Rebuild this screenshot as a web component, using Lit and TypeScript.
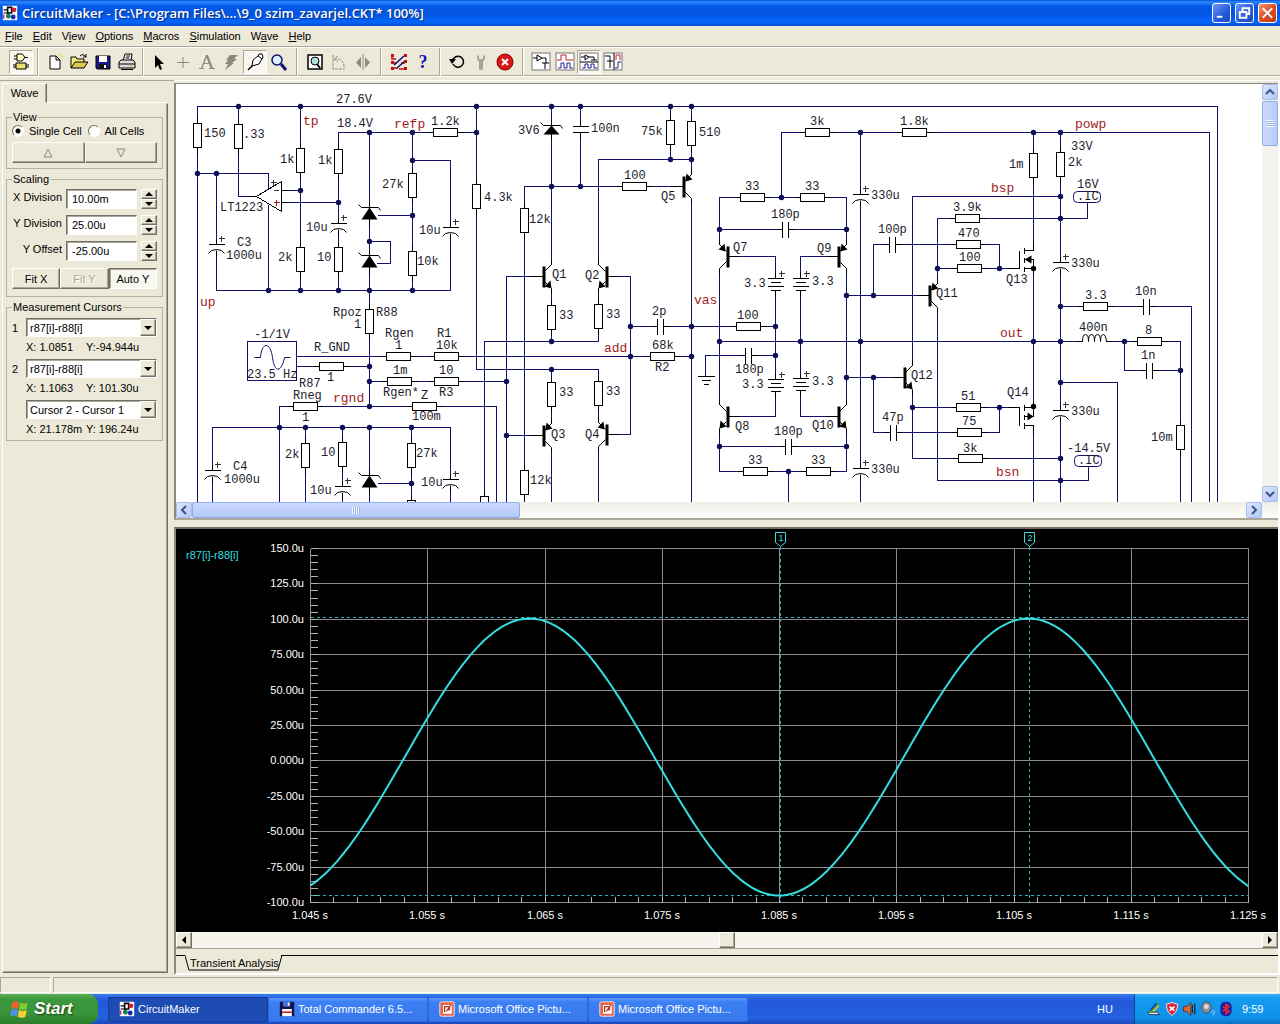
import { LitElement, html, svg, css } from "lit";
import { customElement, property } from "lit/decorators.js";
import { classMap } from "lit/directives/class-map.js";

type Pt = [number, number];

/* ---------- schematic data ---------- */

const WIRES: number[][] = [
  [197, 502, 197, 106, 1217, 106, 1217, 502],
  [238, 106, 238, 196, 256, 196],
  [300, 106, 300, 290],
  [281, 190, 300, 190],
  [281, 202, 338, 202],
  [197, 173, 268, 173, 268, 188],
  [268, 204, 268, 290],
  [216, 173, 216, 290, 450, 290, 450, 160, 412, 160],
  [338, 290, 338, 132, 476, 132],
  [369, 132, 369, 406],
  [377, 215, 412, 215],
  [369, 241, 390, 241, 390, 263, 376, 263],
  [412, 132, 412, 290],
  [296, 356, 691, 356],
  [296, 366, 369, 366],
  [369, 381, 506, 381],
  [279, 502, 279, 406, 496, 406, 496, 502],
  [212, 502, 212, 427, 450, 427, 450, 502],
  [305, 427, 305, 502],
  [342, 427, 342, 502],
  [369, 427, 369, 502],
  [411, 427, 411, 502],
  [377, 483, 411, 483],
  [476, 106, 476, 369, 598, 369, 598, 422],
  [551, 106, 551, 264],
  [580, 106, 580, 186],
  [670, 106, 670, 159],
  [691, 106, 691, 174],
  [691, 159, 598, 159, 598, 264],
  [683, 186, 524, 186, 524, 502],
  [691, 198, 691, 502],
  [543, 276, 506, 276, 506, 502],
  [606, 276, 630, 276, 630, 434, 606, 434],
  [551, 288, 551, 341],
  [598, 288, 598, 341, 484, 341, 484, 502],
  [551, 369, 551, 423],
  [506, 435, 543, 435],
  [551, 447, 551, 502],
  [598, 446, 598, 502],
  [630, 326, 775, 326],
  [705, 376, 705, 355, 775, 355],
  [781, 197, 781, 132, 1209, 132, 1209, 502],
  [719, 244, 719, 197, 846, 197, 846, 244],
  [719, 229, 846, 229],
  [727, 256, 775, 256, 775, 416, 727, 416],
  [838, 256, 800, 256, 800, 416, 838, 416],
  [860, 132, 860, 502],
  [873, 295, 873, 244, 999, 244, 999, 268],
  [912, 365, 912, 196, 1060, 196],
  [937, 283, 937, 218, 1087, 218, 1087, 202],
  [937, 268, 1019, 268],
  [846, 295, 929, 295],
  [937, 307, 937, 480, 1088, 480, 1088, 466],
  [719, 341, 1082, 341],
  [1105, 341, 1180, 341, 1180, 502],
  [719, 268, 719, 404],
  [846, 268, 846, 404],
  [719, 428, 719, 471, 846, 471, 846, 428],
  [719, 446, 846, 446],
  [788, 471, 788, 502],
  [846, 377, 904, 377],
  [873, 377, 873, 432, 999, 432, 999, 407],
  [912, 389, 912, 458, 1060, 458],
  [912, 407, 1019, 407],
  [1033, 132, 1033, 244],
  [1033, 268, 1033, 406],
  [1033, 425, 1033, 502],
  [1060, 132, 1060, 502],
  [1060, 306, 1191, 306, 1191, 502],
  [1124, 341, 1124, 370, 1180, 370],
  [1060, 382, 1117, 382, 1117, 502],
];

const DOTS: Pt[] = [
  [238, 106], [300, 106], [476, 106], [551, 106], [580, 106], [670, 106], [691, 106],
  [369, 132], [412, 132], [476, 132], [412, 160], [197, 173], [216, 173], [300, 190], [338, 202],
  [412, 215], [369, 241], [268, 290], [300, 290], [338, 290], [369, 290], [412, 290],
  [369, 366], [369, 381], [369, 406], [279, 427], [305, 427], [342, 427], [369, 427], [411, 427], [411, 483],
  [551, 186], [580, 186], [670, 159], [691, 159], [551, 341], [551, 369], [506, 381], [506, 435],
  [630, 326], [630, 356], [691, 326], [691, 356], [860, 132], [1033, 132], [1060, 132], [781, 197],
  [719, 229], [846, 229], [937, 268], [999, 268], [846, 295], [873, 295], [775, 326], [775, 355],
  [719, 341], [800, 341], [860, 341], [1033, 341], [1060, 341], [1124, 341], [846, 377], [873, 377],
  [912, 407], [999, 407], [719, 446], [846, 446], [788, 471], [1060, 196], [1060, 218], [1060, 306],
  [1060, 382], [1060, 458], [1060, 480], [1180, 370],
];

const RES_V: Pt[] = [
  [197, 135], [238, 136], [300, 160], [338, 161], [412, 185], [300, 259], [338, 259], [412, 263],
  [369, 321], [305, 455], [342, 454], [411, 455], [476, 196], [524, 220], [670, 132], [691, 133],
  [551, 317], [598, 316], [551, 394], [598, 393], [524, 482], [484, 508], [411, 512],
  [1033, 165], [1060, 164], [1180, 437],
];

const RES_H: Pt[] = [
  [445, 132], [398, 356], [446, 356], [662, 356], [331, 366], [399, 381], [446, 381], [305, 406], [424, 406],
  [634, 186], [817, 132], [914, 132], [752, 197], [812, 197], [967, 218], [968, 244], [969, 268],
  [748, 326], [755, 471], [818, 471], [968, 407], [969, 432], [970, 458], [1095, 306], [1149, 341],
];

/* polarised capacitors: straight plate position */
const CAP_P: Pt[] = [
  [216, 244], [338, 223], [450, 227], [212, 470], [342, 486], [450, 479],
  [860, 194], [860, 468], [1060, 262], [1060, 410],
];

/* plain capacitors on horizontal wires: left plate */
const CAP_H: Pt[] = [
  [657, 326], [782, 229], [745, 355], [785, 446], [889, 244], [890, 432], [1143, 306], [1146, 370],
];

const CELLS: Pt[] = [[775, 278], [800, 278], [775, 379], [800, 378]];

const ZENERS: [number, number, number][] = [
  [369, 207, 12], [369, 255, 12], [369, 475, 12], [551, 125, 9],
];

/* bar x, centre y, lead direction, PNP */
const BJTS: [number, number, number, boolean][] = [
  [543, 276, 1, false], [606, 276, -1, false], [543, 435, 1, true], [606, 434, -1, true], [683, 186, 1, true],
  [727, 256, -1, true], [838, 256, 1, true], [727, 416, -1, false], [838, 416, 1, false],
  [929, 295, 1, true], [904, 377, 1, false],
];

const LABELS: [number, number, string][] = [
  [336, 103, "27.6V"], [337, 127, "18.4V"], [204, 137, "150"], [243, 138, ".33"], [280, 163, "1k"], [318, 164, "1k"],
  [382, 188, "27k"], [220, 211, "LT1223"], [306, 231, "10u"], [419, 234, "10u"], [237, 246, "C3"], [226, 259, "1000u"],
  [278, 261, "2k"], [317, 261, "10"], [417, 265, "10k"], [431, 125, "1.2k"],
  [333, 316, "Rpoz"], [376, 316, "R88"], [354, 328, "1"], [254, 338, "-1/1V"], [314, 351, "R_GND"], [385, 337, "Rgen"],
  [395, 349, "1"], [247, 378, "23.5 Hz"], [327, 381, "1"], [393, 374, "1m"], [439, 374, "10"], [436, 349, "10k"],
  [437, 337, "R1"], [439, 396, "R3"], [383, 396, "Rgen*"], [421, 399, "Z"], [412, 420, "100m"], [299, 387, "R87"],
  [293, 399, "Rneg"], [302, 421, "1"], [233, 470, "C4"], [224, 483, "1000u"], [285, 458, "2k"], [321, 456, "10"],
  [416, 457, "27k"], [310, 494, "10u"], [421, 486, "10u"],
  [484, 201, "4.3k"], [518, 134, "3V6"], [591, 132, "100n"], [641, 135, "75k"], [699, 136, "510"], [624, 179, "100"],
  [661, 200, "Q5"], [529, 223, "12k"], [552, 278, "Q1"], [585, 279, "Q2"], [559, 319, "33"], [606, 318, "33"],
  [652, 315, "2p"], [652, 349, "68k"], [655, 371, "R2"], [559, 396, "33"], [606, 395, "33"], [551, 438, "Q3"],
  [585, 438, "Q4"], [530, 484, "12k"],
  [810, 125, "3k"], [900, 125, "1.8k"], [745, 190, "33"], [805, 190, "33"], [771, 218, "180p"], [871, 199, "330u"],
  [953, 211, "3.9k"], [958, 237, "470"], [959, 261, "100"], [878, 233, "100p"], [733, 251, "Q7"], [817, 252, "Q9"],
  [744, 287, "3.3"], [812, 285, "3.3"], [936, 297, "Q11"], [737, 319, "100"], [735, 373, "180p"], [742, 388, "3.3"],
  [812, 385, "3.3"], [735, 430, "Q8"], [812, 429, "Q10"], [774, 435, "180p"], [748, 464, "33"], [811, 464, "33"],
  [871, 473, "330u"], [882, 421, "47p"], [911, 379, "Q12"], [961, 400, "51"], [962, 425, "75"], [963, 452, "3k"],
  [1077, 188, "16V"], [1077, 200, ".IC"], [1071, 150, "33V"], [1068, 166, "2k"], [1009, 168, "1m"],
  [1071, 267, "330u"], [1006, 283, "Q13"], [1085, 299, "3.3"], [1135, 295, "10n"], [1079, 331, "400n"],
  [1145, 334, "8"], [1141, 359, "1n"], [1007, 396, "Q14"], [1071, 415, "330u"], [1151, 441, "10m"],
  [1067, 452, "-14.5V"], [1078, 464, ".IC"],
];

const NETS: [number, number, string][] = [
  [303, 125, "tp"], [394, 128, "refp"], [200, 306, "up"], [333, 402, "rgnd"], [604, 352, "add"], [694, 304, "vas"],
  [1075, 128, "powp"], [991, 192, "bsp"], [1000, 337, "out"], [996, 476, "bsn"],
];

const bjt = ([bx, cy, d, pnp]: [number, number, number, boolean]) => {
  const s = pnp ? -1 : 1;
  const o: Pt = [bx + 8 * d, cy + 12 * s];
  const i: Pt = [bx + 2 * d, cy + 5 * s];
  const [tip, base] = pnp ? [i, [bx + 6 * d, cy + 10 * s] as Pt] : [o, [bx + 4 * d, cy + 7 * s] as Pt];
  const w: Pt = [3 * d, -3 * s];
  const arrow = `${tip} ${base[0] + w[0]},${base[1] + w[1]} ${base[0] - w[0]},${base[1] - w[1]}`;
  return svg`
    <path class="thin" d="M${bx + d},${cy - 5} L${bx + 8 * d},${cy - 12} v-5 M${bx + d},${cy + 5} L${bx + 8 * d},${cy + 12} v5 M${bx},${cy} h${-12 * d}"/>
    <polygon class="solid" points=${arrow} />
    <rect class="solid" x=${bx - 1} y=${cy - 10} width="3" height="21"/>`;
};

@customElement("circuit-sheet")
class CircuitSheet extends LitElement {
  static styles = css`
    :host { display: block; flex: 1; min-width: 0; overflow: hidden; background: #fff; }
    svg { display: block; }
    .wire { fill: none; stroke: #12126e; shape-rendering: crispEdges; }
    .dot { fill: #10105a; }
    .part { fill: #fff; stroke: #000; shape-rendering: crispEdges; }
    .line { fill: none; stroke: #000; shape-rendering: crispEdges; }
    .thin { fill: none; stroke: #000; }
    .solid { fill: #000; }
    .gap { fill: #fff; }
    .frame { fill: none; stroke: #12126e; }
    .plus { fill: none; stroke: #333; shape-rendering: crispEdges; }
    .red { stroke: #a01818; }
    .label { font: 12px "Liberation Mono", monospace; fill: #1c1c2c; white-space: pre; }
    .net { font: 13px "Liberation Mono", monospace; fill: #a01c1c; }
  `;
  render() {
    const plus = (x: number, y: number) => svg`<path class="plus" d="M${x - 3},${y} h6 M${x},${y - 3} v6"/>`;
    return html`<svg width="1086" height="418" viewBox="176 84 1086 418" role="img" aria-label="Amplifier schematic">
      <g transform="translate(.5 .5)">
        ${WIRES.map((w) => svg`<polyline class="wire" points=${w.join(" ")} />`)}
        ${DOTS.map(([x, y]) => svg`<circle class="dot" cx=${x} cy=${y} r="2.7"/>`)}
        ${RES_V.map(([x, y]) => svg`<path class="line" d="M${x},${y - 18} v36"/><rect class="part" x=${x - 4} y=${y - 12} width="8" height="24"/>`)}
        ${RES_H.map(([x, y]) => svg`<path class="line" d="M${x - 18},${y} h36"/><rect class="part" x=${x - 12} y=${y - 4} width="24" height="8"/>`)}
        ${CAP_P.map(([x, y]) => svg`<rect class="gap" x=${x - 2} y=${y} width="4" height="6"/>
          <path class="line" d="M${x},${y - 6} v6 M${x - 8},${y} h16 M${x},${y + 6} v6"/>
          <path class="thin" d="M${x - 8},${y + 9} q2,-4 8,-4 q6,0 8,4"/>${plus(x + 5, y - 6)}`)}
        ${CAP_H.map(([x, y]) => svg`<rect class="gap" x=${x} y=${y - 2} width="6" height="4"/>
          <path class="line" d="M${x - 6},${y} h6 M${x},${y - 8} v16 M${x + 6},${y - 8} v16 M${x + 6},${y} h6"/>`)}
        <rect class="gap" x="578" y="126" width="4" height="6"/>
        <path class="line" d="M580,120 v6 M572,126 h16 M572,132 h16 M580,132 v6"/>
        ${CELLS.map(([x, y]) => svg`<rect class="gap" x=${x - 2} y=${y} width="4" height="12"/>
          <path class="line" d="M${x},${y - 6} v6 M${x - 8},${y} h16 M${x - 5},${y + 4} h10 M${x - 8},${y + 8} h16 M${x - 5},${y + 12} h10 M${x},${y + 12} v6"/>${plus(x + 6, y - 5)}`)}
        ${ZENERS.map(([x, y, h]) => svg`<path class="thin" d="M${x - 11},${y - 3} l3,3 h17 l2,3"/>
          <path class="line" d="M${x},${y - 6} v${h + 12}"/>
          <polygon class="solid" points="${x},${y} ${x + 8},${y + h} ${x - 8},${y + h}"/>`)}
        ${BJTS.map(bjt)}
        <polygon class="part" points="256,196 281,181 281,211"/>
        <path class="line" d="M250,196 h6 M281,190 h6 M281,202 h6"/>
        <path class="plus" d="M273,190 h5 M270,182 h6 M273,179 v6"/>
        <path class="plus red" d="M273,202 h6 M276,199 v6"/>
        <rect class="frame" x="247" y="341" width="49" height="39"/>
        <path class="frame" d="M254,357 h6 C261,341 270,341 272,357 S281,372 284,357 h6"/>
        <path class="line" d="M697,376 h17 M701,380 h9 M703,384 h5"/>
        <rect class="frame" x="1073" y="191" width="27" height="11" rx="4"/>
        <rect class="frame" x="1074" y="455" width="27" height="11" rx="4"/>
        <path class="thin" d="M1076,341 h6 q0,-7 3,-7 q3,0 3,7 q0,-7 3,-7 q3,0 3,7 q0,-7 3,-7 q3,0 3,7 q0,-7 3,-7 q2,0 3,7 h6"/>
        <path class="line" d="M1007,268 h12 V250 M1024,247 v6 M1024,257 v5 M1024,266 v5 M1024,250 h9 v-8 M1024,259 h9 v14 M1024,268 h9"/>
        <polygon class="solid" points="1024,259 1031,255 1031,263"/><circle class="solid" cx="1033" cy="268" r="2.7"/>
        <path class="line" d="M1007,407 h12 V425 M1024,404 v6 M1024,414 v5 M1024,422 v6 M1024,407 h9 M1024,416 h9 v-14 M1024,425 h9 v8"/>
        <polygon class="solid" points="1033,416 1027,412 1027,420"/><circle class="solid" cx="1033" cy="406" r="2.7"/>
      </g>
      ${LABELS.map(([x, y, t]) => svg`<text class="label" x=${x} y=${y}>${t}</text>`)}
      ${NETS.map(([x, y, t]) => svg`<text class="net" x=${x} y=${y}>${t}</text>`)}
    </svg>`;
  }
}

@customElement("wave-plot")
class WavePlot extends LitElement {
  static styles = css`
    :host { display: block; flex: 1; background: #000; }
    svg { display: block; width: 100%; height: 403px; }
    .grid { stroke: #8c8c8c; fill: none; shape-rendering: crispEdges; }
    .tick { stroke: #b4b4b4; shape-rendering: crispEdges; }
    .trace { stroke: #35dde0; fill: none; stroke-width: 2; }
    .cursor { stroke: #2fb6b8; fill: none; stroke-dasharray: 3 3; shape-rendering: crispEdges; }
    .flag { stroke: #46d6d8; fill: #000; }
    .axis { font: 11px "Liberation Sans", Arial, sans-serif; fill: #fff; }
    .cyan { fill: #35dde0; }
    .flagtext { font-size: 9px; }
    .end { text-anchor: end; }
    .mid { text-anchor: middle; }
  `;
  render() {
    const x0 = 310, x1 = 1248, y0 = 548, y1 = 902;
    const ys = ["150.0u", "125.0u", "100.0u", "75.00u", "50.00u", "25.00u", "0.000u", "-25.00u", "-50.00u", "-75.00u", "-100.0u"];
    const xs = ["1.045 s", "1.055 s", "1.065 s", "1.075 s", "1.085 s", "1.095 s", "1.105 s", "1.115 s", "1.125 s"];
    const gy = (i: number) => Math.round(y0 + (i * (y1 - y0)) / 10);
    const gx = (i: number) => Math.ceil(x0 + (i * (x1 - x0)) / 8 - 0.3);
    const pts: string[] = [];
    for (let x = x0; x <= x1; x += 3) {
      pts.push(`${x},${(756.5 - 138.5 * -Math.cos((2 * Math.PI * (x - 529)) / 499) * -1).toFixed(1)}`);
    }
    pts.push(`${x1},886`);
    return html`<svg viewBox="176 529 1102 403" preserveAspectRatio="xMinYMin meet" role="img" aria-label="Transient analysis waveform">
      <g transform="translate(.5 .5)">
        ${ys.map((_, i) => svg`<path class="grid" d="M${x0},${gy(i)} H${x1}"/>`)}
        ${xs.map((_, i) => svg`<path class="grid" d="M${gx(i)},${y0} V${y1}"/>`)}
        ${Array.from({ length: 51 }, (_, i) => svg`<path class="tick" d="M${x0},${Math.round(y0 + i * 7.08)} h7"/>`)}
        ${Array.from({ length: 41 }, (_, i) => svg`<path class="tick" d="M${Math.round(x0 + i * 23.45)},${y1} v-6"/>`)}
        <path class="cursor" d="M${x0},617 H${x1} M${x0},895 H${x1} M780,546 V${y1} M1029,546 V${y1}"/>
        <polyline class="trace" points=${pts.join(" ")} />
        <path class="flag" d="M775,532 h10 v10 l-5,4 l-5,-4 z M1024,532 h10 v10 l-5,4 l-5,-4 z"/>
      </g>
      <text class="axis cyan flagtext mid" x="781" y="541">1</text>
      <text class="axis cyan flagtext mid" x="1030" y="541">2</text>
      <text class="axis cyan" x="186" y="559">r87[i]-r88[i]</text>
      ${ys.map((t, i) => svg`<text class="axis end" x="304" y=${gy(i) + 4}>${t}</text>`)}
      ${xs.map((t, i) => svg`<text class="axis mid" x=${gx(i)} y="919">${t}</text>`)}
    </svg>`;
  }
}

/* ---------- toolbar icons, 20 x 20 ---------- */

const ICONS: Record<string, unknown> = {
  parts: svg`<path d="M6,2 h5 q5,3 0,7 h-5 z M3,4 h3 M3,7 h3 M14,5.500 h3" fill="#ffffc0" stroke="#000"/><path d="M5,11 h10 v6 h-10 z M2,13 h3 M2,15 h3 M15,13 h3 M15,15 h3" fill="#e8e070" stroke="#000"/>`,
  fresh: svg`<path d="M5,4 h6 l4,4 v9 h-10 z M11,4 v4 h4" fill="#fff" stroke="#000"/><path d="M13,2 l4,3 M17,1 v4" stroke="#f0e050"/>`,
  open: svg`<path d="M2,16 V5 h5 l1,2 h7 v3" fill="#f8f080" stroke="#000"/><path d="M2,16 l4,-6 h13 l-4,6 z" fill="#d8cc50" stroke="#000"/><path d="M11,4 q3,-3 6,1 M17,2 v3 h-3" fill="none" stroke="#000"/>`,
  save: svg`<path d="M3,4 h14 v13 h-13 l-1,-1 z" fill="#1a1a90" stroke="#000"/><path d="M6,4 h8 v6 h-8 z" fill="#fff"/><path d="M6,12 h8 v5 h-8 z" fill="#111"/><path d="M11,13 h2 v3 h-2 z" fill="#fff"/>`,
  print: svg`<path d="M6,9 l2,-7 h7 l-1,7 z" fill="#fff" stroke="#000"/><path d="M9,4 h4 M8.500,6 h4" stroke="#000"/><path d="M2,10 l2,-2 h12 l2,2 v6 h-16 z" fill="#ddd" stroke="#000"/><path d="M2,12 h16 M4,17.500 h12" stroke="#000"/><path d="M12,14 h3" stroke="#cc0"/>`,
  arrow: svg`<path d="M6,3 v13 l3,-3 l2,5 l2,-1 l-2,-5 h4 z" fill="#000"/>`,
  cross: svg`<path d="M10,5 v11 M4,10.500 h12" stroke="#8c8a80"/>`,
  letter: svg`<path d="M9,3 h2 l5,13 h2 v1 h-6 v-1 h1.500 l-1.500,-4 h-5 l-1.500,4 h1.500 v1 h-5 v-1 h2 z M7.400,11 h4.200 l-2.100,-5.500 z" fill="#8c8a80" fill-rule="evenodd"/>`,
  bolt: svg`<path d="M9,3 h8 l-4,4 h3 l-5,4 h2 L4,18 l3,-6 h-3 l3,-4 h-2 z" fill="#8c8a80"/>`,
  probe: svg`<path d="M3,18 l5,-5" stroke="#000" stroke-width="1.500"/><path d="M7,14 l1,-6 l5,-4 l4,3 l-3,5 z M13,4 l1,-2 h3 l1,3 l-1,2" fill="#fff" stroke="#000"/>`,
  zoom: svg`<circle cx="8" cy="8" r="5" fill="#e0f0ff" stroke="#101070" stroke-width="1.500"/><path d="M12,12 l5,6" stroke="#101070" stroke-width="3"/>`,
  fit: svg`<rect x="3" y="3" width="14" height="14" fill="#fff" stroke="#000" stroke-width="1.500"/><circle cx="10" cy="9" r="4" fill="#b0e0d8" stroke="#000"/><path d="M12,12 l3,4" stroke="#000" stroke-width="2"/>`,
  rotate: svg`<path d="M4,3 v14 h12 M5,7 h4 q6,1 6,8 M9,4 l-4,3 l4,3" fill="none" stroke="#8c8a80" stroke-dasharray="3 1"/>`,
  mirror: svg`<path d="M10,2 v16" stroke="#8c8a80"/><path d="M8,5 v11 l-5,-5.500 z M12,5 v11 l5,-5.500 z" fill="#8c8a80"/>`,
  trace: svg`<path d="M3,3 v4 h4 M3,11 h5 M3,16 h6 M16,11 l-4,0 M16,17 h-6" fill="none" stroke="#c01010" stroke-width="1.500"/><path d="M5,13 l10,-9 M8,16 l8,-7" stroke="#101080" stroke-width="1.500"/><path d="M15,2 h3 v3 h-3 z M15,15 h3 v3 h-3 z M2,2 h3 v3 h-3 z M2,9 h3 v3 h-3 z M2,15 h3 v3 h-3 z M15,8 h3 v3 h-3 z" fill="#c01010"/>`,
  help: svg`<text x="10" y="16" text-anchor="middle" font-family="Liberation Serif, serif" font-weight="bold" font-size="18" fill="#1414b8">?</text>`,
  reset: svg`<path d="M6,12 a5.500,5.500 0 1 0 1,-6 l-3,3" fill="none" stroke="#000" stroke-width="1.500"/><path d="M2,7 h7 l-4,5 z" fill="#000"/>`,
  tool: svg`<path d="M6,3 v4 l2,3 v7 q2,2 4,0 v-7 l2,-3 v-4 l-2,1 v3 h-4 v-3 z" fill="#a8a598"/>`,
  stop: svg`<circle cx="10" cy="10" r="8" fill="#d81818" stroke="#800"/><path d="M7,7 l6,6 M13,7 l-6,6" stroke="#fff" stroke-width="2"/>`,
  w1: svg`<rect x="1" y="1" width="18" height="17" fill="#fff" stroke="#777"/><path d="M2,6 h4 M6,3 l5,3 l-5,3 z M11,6 h4 v5 M11,11 h7 M14,11 v6" fill="none" stroke="#000"/>`,
  w2: svg`<rect x="1" y="1" width="18" height="17" fill="#fff" stroke="#777"/><path d="M2,8 h4 v-5 h5 v5 h7" fill="none" stroke="#c02020"/><path d="M3,16 h3 v-5 h3 v5 h3 v-5 h3 v5 h3" fill="none" stroke="#1c1c90"/>`,
  w3: svg`<rect x="1" y="1" width="18" height="17" fill="#fff" stroke="#777"/><path d="M2,5 h4 M6,3 l4,2 l-4,3 z M10,5 h5 v3 M12,8 h6 M1,10 h18" fill="none" stroke="#000"/><path d="M3,16 h3 v-4 h3 v4 h3 v-4 h3 v4 h3" fill="none" stroke="#1c1c90"/>`,
  w4: svg`<rect x="1" y="1" width="18" height="17" fill="#fff" stroke="#777"/><path d="M2,4 h5 v5 M4,9 h6 M7,9 v7 M11,1 v17" fill="none" stroke="#000"/><path d="M13,8 v-5 h4 v5" fill="none" stroke="#c02020"/><path d="M12,16 h3 v-6 h3" fill="none" stroke="#1c1c90"/>`,
  app: svg`<rect x="1" y="1" width="18" height="18" fill="#fff"/><path d="M2,6 h5 M2,10 h6 M12,7 h4 M5,14 h5" stroke="#000" stroke-width="1.500"/><path d="M7,3 h5 v7 h-5 z" fill="none" stroke="#000" stroke-width="2"/><circle cx="15" cy="6" r="3" fill="#d02030"/><circle cx="8" cy="14" r="3" fill="#108050"/><circle cx="14" cy="15" r="3" fill="#1828b0"/><path d="M2,12 v5" stroke="#c02090" stroke-width="2"/>`,
  disk: svg`<path d="M1,1 h18 v18 h-18 z" fill="#15154a"/><path d="M5,1 h9 v6 h-9 z" fill="#5068e0"/><path d="M4,10 h12 v9 h-12 z" fill="#fff"/><path d="M4,14 h12" stroke="#c02020" stroke-width="2"/><path d="M11,2 h2 v4 h-2 z" fill="#fff"/>`,
  office: svg`<rect x="1" y="1" width="18" height="18" rx="2" fill="#e4664a" stroke="#fff"/><rect x="5" y="5" width="11" height="11" fill="#fff"/><path d="M7,14 v-7 h6 v4 h-3 M9,13 l6,-8" fill="none" stroke="#b83020" stroke-width="1.500"/>`,
  flag: svg`<path d="M3,4 q3,-2 6,0 l-1,6 q-3,-2 -6,0 z" fill="#f06030"/><path d="M10,4 q4,2 7,0 l-1,6 q-3,2 -7,0 z" fill="#80c830"/><path d="M2,11 q3,-2 6,0 l-1,6 q-3,-2 -6,0 z" fill="#5090f0"/><path d="M9,11 q4,2 7,0 l-1,6 q-3,2 -7,0 z" fill="#f8d030"/>`,
  tray1: svg`<path d="M2,14 h12 l3,3 h-13 z" fill="#eee" stroke="#222"/><path d="M4,15 L15,3" stroke="#38a830" stroke-width="3"/><path d="M5,12 l8,-9" stroke="#2040c0" stroke-width="2"/><path d="M9,13 l7,-7" stroke="#e0c020" stroke-width="2"/>`,
  tray2: svg`<path d="M10,2 l7,2 q0,10 -7,14 q-7,-4 -7,-14 z" fill="#d82838" stroke="#fff"/><path d="M7,7 l6,5 M13,7 l-6,5" stroke="#fff" stroke-width="2"/>`,
  tray3: svg`<path d="M2,7 h4 l5,-5 v16 l-5,-5 h-4 z" fill="#e06830" stroke="#502010"/><path d="M13,5 v10 M16,3 v14" stroke="#222" stroke-width="1.500"/>`,
  tray4: svg`<ellipse cx="8" cy="8" rx="6" ry="7" fill="#8a9098" stroke="#444"/><circle cx="8" cy="7" r="3" fill="#d8dce0"/><path d="M14,15 l3,-4 M16,18 l3,-5" stroke="#d0e8ff"/>`,
  tray5: svg`<rect x="3" y="1" width="14" height="18" rx="6" fill="#1420a8"/><path d="M6,7 l8,6 l-4,3 v-12 l4,3 l-8,6" fill="none" stroke="#e02828" stroke-width="2"/>`,
};

@customElement("cm-icon")
class CmIcon extends LitElement {
  @property() name = "";
  static styles = css`
    :host { display: block; width: 20px; height: 20px; }
    svg { display: block; width: 100%; height: 100%; }
  `;
  render() {
    return html`<svg viewBox="0 0 20 20" aria-hidden="true">${ICONS[this.name]}</svg>`;
  }
}

type Tool = { icon?: string; tip?: string; on?: boolean; sep?: string };
const TOOLS: Tool[] = [
  { icon: "parts", tip: "Parts panel", on: true }, { sep: "s10" },
  { icon: "fresh", tip: "New" }, { icon: "open", tip: "Open" }, { icon: "save", tip: "Save" }, { icon: "print", tip: "Print" }, { sep: "s8" },
  { icon: "arrow", tip: "Select" }, { icon: "cross", tip: "Wire" }, { icon: "letter", tip: "Text" }, { icon: "bolt", tip: "Delete" },
  { icon: "probe", tip: "Probe", on: true }, { icon: "zoom", tip: "Zoom" }, { sep: "s12" },
  { icon: "fit", tip: "Fit" }, { icon: "rotate", tip: "Rotate" }, { icon: "mirror", tip: "Mirror" }, { sep: "s12" },
  { icon: "trace", tip: "Trace" }, { icon: "help", tip: "Help" }, { sep: "s10" },
  { icon: "reset", tip: "Reset" }, { icon: "tool", tip: "Setup" }, { icon: "stop", tip: "Stop" }, { sep: "s12" },
  { icon: "w1", tip: "Circuit view" }, { icon: "w2", tip: "Wave view" }, { icon: "w3", tip: "Split horizontally", on: true }, { icon: "w4", tip: "Split vertically" },
];

const MENUS = [["", "F", "ile"], ["", "E", "dit"], ["V", "i", "ew"], ["", "O", "ptions"], ["", "M", "acros"], ["", "S", "imulation"], ["W", "a", "ve"], ["", "H", "elp"]];

const chevron = (d: string) => html`<svg class="chev" viewBox="0 0 10 10" aria-hidden="true"><path d=${d} /></svg>`;

@customElement("app-root")
export class AppRoot extends LitElement {
  static styles = css`
    * { box-sizing: border-box; }
    :host {
      display: flex; flex-direction: column; min-height: 100vh; background: #ece9d8; color: #000;
      font: 11px/14px "Liberation Sans", Arial, sans-serif; overflow: hidden;
    }
    button, input, select { font: inherit; color: inherit; margin: 0; padding: 0; border-radius: 0; }

    .title {
      display: flex; align-items: center; gap: 4px; height: 26px; padding: 0 3px 0 2px; color: #fff;
      background: linear-gradient(#0a50d8 0, #2a8afc 2px, #0458e6 6px, #0456e4 14px, #0466fc 22px, #0450d0 26px);
    }
    .title h1 { flex: 1; margin: 0; font: 600 13px/20px "Open Sans", "Liberation Sans", sans-serif; text-shadow: 1px 1px 1px #0a2a80; white-space: nowrap; }
    .title .appicon { width: 16px; height: 16px; }
    .win {
      width: 19px; height: 20px; border: 1px solid #fff; border-radius: 3px;
      background: linear-gradient(135deg, #6c98f8, #2458d8 60%, #1c48c0);
    }
    .win.close { background: linear-gradient(135deg, #f09878, #e04c20 50%, #c03810); }
    .win svg { display: block; width: 17px; height: 18px; fill: none; stroke: #fff; stroke-width: 2; }

    .menu { display: flex; height: 20px; align-items: center; }
    .menu button { border: 0; background: none; padding: 0 5px; line-height: 18px; }

    .tools {
      display: flex; align-items: center; height: 34px; padding: 0 0 4px 9px;
      border-top: 1px solid #aca899; box-shadow: inset 0 1px #fff, inset 0 -3px #ece9d8, inset 0 -4px #fff, inset 0 -5px #aca899;
    }
    .tool { display: grid; place-items: center; width: 24px; height: 24px; border: 0; background: none; }
    .tool.on { background: #f8f7f0; border: 1px solid; border-color: #aca899 #fff #fff #aca899; }
    .sep { height: 28px; background: linear-gradient(90deg, #aca899 1px, #fff 1px) center / 2px 100% no-repeat; }
    .s8 { width: 8px; } .s10 { width: 10px; } .s12 { width: 12px; }

    .main { display: flex; flex: 1; min-height: 0; }
    .side { display: flex; flex-direction: column; width: 174px; padding: 2px 6px 2px 2px; border-top: 1px solid #aca899; }
    .tabs { display: flex; height: 20px; }
    .tab {
      width: 45px; border: 1px solid; border-color: #fff #716f64 transparent #fff; box-shadow: inset -1px 0 #aca899;
      background: none; line-height: 16px;
    }
    .tabs::after { content: ""; flex: 1; border-bottom: 1px solid #fff; }
    .panel {
      flex: 1; display: flex; flex-direction: column; gap: 3px; padding: 6px 4px 0 3px;
      border: 1px solid; border-color: transparent #716f64 #716f64 #fff; box-shadow: inset -1px -1px #aca899;
    }
    fieldset {
      margin: 0; padding: 0 5px 5px; min-width: 0; border: 1px solid #b4b0a0;
      display: flex; flex-direction: column;
    }
    legend { padding: 0 1px; line-height: 14px; }
    .radios { display: flex; gap: 6px; height: 14px; align-items: center; }
    .radios label { display: flex; align-items: center; gap: 5px; white-space: nowrap; }
    input[type="radio"] {
      appearance: none; width: 12px; height: 12px; border-radius: 50%; background: #fff;
      border: 1px solid; border-color: #716f64 #fff #fff #716f64;
    }
    input[type="radio"]:checked { background: radial-gradient(circle, #000 2px, #fff 3px); }
    .row { display: flex; }
    .btn {
      flex: 1; height: 21px; background: #ece9d8; border: 1px solid; border-color: #fff #716f64 #716f64 #fff;
      box-shadow: inset -1px -1px #aca899; line-height: 18px; white-space: nowrap;
    }
    .btn:disabled { color: #aca899; text-shadow: 1px 1px #fff; }
    .btn.on { background: #f8f7f0; border-color: #716f64 #fff #fff #716f64; box-shadow: inset 1px 1px #aca899; }
    .btn svg { display: block; margin: auto; width: 10px; height: 10px; fill: none; stroke: #8c8a80; }
    .nav { margin-top: 4px; }
    .field { display: grid; grid-template-columns: 50px 1fr 16px; column-gap: 4px; height: 26px; align-items: center; }
    .field label { text-align: right; white-space: nowrap; line-height: 22px; align-self: start; }
    .sunk { background: #fff; border: 1px solid; border-color: #716f64 #fff #fff #716f64; box-shadow: inset 1px 1px #aca899; }
    .field input { width: 100%; height: 20px; padding: 0 5px; align-self: center; }
    .spin { display: flex; flex-direction: column; }
    .spin button, .drop span {
      display: grid; place-items: center; background: #ece9d8; border: 1px solid;
      border-color: #fff #716f64 #716f64 #fff; box-shadow: inset -1px -1px #aca899;
    }
    .spin button { height: 10px; }
    .spin svg, .drop svg { display: block; width: 8px; height: 4px; }
    .fits { margin-top: 4px; }
    .cursor { display: grid; grid-template-columns: 14px 1fr; row-gap: 3px; align-items: center; }
    .cursor + .cursor { margin-top: 5px; }
    .drop { position: relative; }
    .drop select { display: block; appearance: none; width: 100%; height: 19px; padding: 0 3px; outline: 0; }
    .drop span { position: absolute; right: 1px; top: 1px; bottom: 1px; width: 16px; pointer-events: none; }
    .read { grid-column: 2; display: grid; grid-template-columns: 60px 1fr; white-space: nowrap; line-height: 14px; }
    .cursors { padding-bottom: 4px; }
    .cursors legend { margin-bottom: 4px; }
    .scaling { padding-bottom: 7px; }

    .work { display: flex; flex-direction: column; flex: 1; min-width: 0; padding-top: 2px; border-top: 1px solid #fff; border-right: 2px solid #fff; }
    .sheet { display: flex; flex-direction: column; border: solid; border-width: 1px 0 2px 2px; border-color: #8c8a80 #fff #aca899 #8c8a80; }
    .view { display: flex; }
    .vbar { display: flex; flex-direction: column; width: 16px; background: #f4f3ee; }
    .hbar { display: flex; height: 16px; padding-right: 16px; background: linear-gradient(#f0efe6, #fdfdfa); }
    .xp {
      display: grid; place-items: center; width: 16px; height: 16px; border: 1px solid #a8bcf0; border-radius: 2px;
      background: linear-gradient(135deg, #dce6fe, #b4c8f8);
    }
    .chev { width: 10px; height: 10px; fill: none; stroke: #3c5488; stroke-width: 2; }
    .grip { display: grid; place-items: center; background: linear-gradient(90deg, #ccdafe, #b8ccfc); border: 1px solid #90acec; border-radius: 2px; }
    .grip.v { height: 45px; margin-top: 1px; }
    .grip.h { width: 328px; background: linear-gradient(#ccdafe, #b4c8f8); }
    .grip i { display: block; width: 8px; height: 7px; background: repeating-linear-gradient(#f4f8ff 0 1px, #9cb4ec 1px 2px); }
    .grip.h i { background: repeating-linear-gradient(90deg, #f4f8ff 0 1px, #9cb4ec 1px 2px); }
    .fill { flex: 1; }
    .scope { display: flex; flex-direction: column; flex: 1; margin-top: 7px; border-left: 2px solid #8c8a80; border-top: 2px solid #716f64; border-bottom: 2px solid #fff; }
    .old { display: flex; height: 17px; background: #f6f4ec; border-bottom: 1px solid #aca899; }
    .old button { width: 16px; background: #ece9d8; border: 1px solid; border-color: #fff #716f64 #716f64 #fff; box-shadow: inset -1px -1px #aca899; display: grid; place-items: center; }
    .old svg { display: block; width: 4px; height: 8px; }
    .before, .after { flex: 1; }
    .strip { display: flex; height: 24px; padding-top: 6px; }
    .strip::before { content: ""; width: 9px; border-top: 1px solid #000; }
    .strip::after { content: ""; flex: 1; border-top: 1px solid #000; margin-left: -3px; }
    .sheettab { position: relative; border: 0; background: none; height: 16px; padding: 0 5px; line-height: 15px; white-space: nowrap; }
    .sheettab svg { position: absolute; inset: 0; width: 100%; height: 100%; fill: none; stroke: #000; }

    .status { display: flex; gap: 2px; height: 19px; padding: 2px 2px 1px 0; }
    .status div { border: 1px solid; border-color: #aca899 #fff #fff #aca899; flex: 1; }
    .status div:first-child { flex: 0 0 51px; }

    .task {
      display: flex; align-items: center; height: 30px; color: #fff;
      background: linear-gradient(#3c80f0 0, #2a68e8 3px, #2258d8 8px, #2460e0 24px, #1a48b8 30px);
    }
    .start {
      display: flex; align-items: center; gap: 3px; width: 98px; height: 30px; padding: 0 0 0 9px; border: 0;
      border-radius: 0 10px 10px 0; color: #fff; font: italic bold 17px/24px "Liberation Sans", Arial, sans-serif;
      text-shadow: 1px 1px 2px #143c10; margin-right: 10px;
      background: linear-gradient(#5cb05c 0, #3c983c 5px, #389438 20px, #2c7c2c 30px);
    }
    .start cm-icon { width: 22px; height: 22px; }
    .app {
      display: flex; align-items: center; gap: 3px; width: 160px; height: 25px; padding: 0 10px; border: 1px solid #2c68e0;
      border-radius: 2px; color: #fff; background: linear-gradient(#5c98fc, #3c80f4 4px, #3878ec);
      white-space: nowrap;
    }
    .app.on { background: #1c4cb4; border-color: #163c94; }
    .app cm-icon { width: 16px; height: 16px; }
    .lang { margin-left: auto; padding-right: 21px; }
    .tray {
      display: flex; align-items: center; gap: 2px; height: 30px; width: 146px; padding-left: 11px;
      border-left: 1px solid #0c4890; background: linear-gradient(#38b0f8 0, #149cf0 4px, #1090e8 24px, #0c70c8 30px);
    }
    .tray cm-icon { width: 16px; height: 16px; }
    .tray time { margin-left: 6px; }
  `;

  private drop(id: string, label: string, value: string) {
    return html`<div class="drop"><select id=${id} class="sunk" aria-label=${label}><option>${value}</option></select>
      <span><svg viewBox="0 0 8 4"><path d="M0,0 h8 l-4,4 z"/></svg></span></div>`;
  }

  private field(id: string, label: string, value: string) {
    return html`<div class="field"><label for=${id}>${label}</label><input id=${id} class="sunk" .value=${value} />
      <div class="spin"><button aria-label="Increase ${label}"><svg viewBox="0 0 8 4"><path d="M0,4 h8 l-4,-4 z"/></svg></button>
      <button aria-label="Decrease ${label}"><svg viewBox="0 0 8 4"><path d="M0,0 h8 l-4,4 z"/></svg></button></div></div>`;
  }

  render() {
    return html`
      <header class="title">
        <cm-icon class="appicon" name="app"></cm-icon>
        <h1>CircuitMaker - [C:\\Program Files\\...\\9_0 szim_zavarjel.CKT* 100%]</h1>
        <button class="win" aria-label="Minimize"><svg viewBox="0 0 18 18"><path d="M4,13 h6"/></svg></button>
        <button class="win" aria-label="Restore"><svg viewBox="0 0 18 18"><path d="M7,7 V4 h7 v6 h-3 M4,8 h7 v6 h-7 z"/></svg></button>
        <button class="win close" aria-label="Close"><svg viewBox="0 0 18 18"><path d="M4,4 l10,10 M14,4 l-10,10"/></svg></button>
      </header>
      <nav class="menu">${MENUS.map(([a, u, b]) => html`<button>${a}<u>${u}</u>${b}</button>`)}</nav>
      <div class="tools">
        ${TOOLS.map((t) => t.sep
          ? html`<div class="sep ${t.sep}"></div>`
          : html`<button class=${classMap({ tool: true, on: !!t.on })} aria-label=${t.tip}><cm-icon name=${t.icon}></cm-icon></button>`)}
      </div>
      <div class="main">
        <aside class="side">
          <div class="tabs"><button class="tab">Wave</button></div>
          <div class="panel">
            <fieldset>
              <legend>View</legend>
              <div class="radios">
                <label><input type="radio" name="cells" checked />Single Cell</label>
                <label><input type="radio" name="cells" />All Cells</label>
              </div>
              <div class="row nav">
                <button class="btn" aria-label="Previous cell"><svg viewBox="0 0 10 10"><path d="M1,9 h8 l-4,-8 z"/></svg></button>
                <button class="btn" aria-label="Next cell"><svg viewBox="0 0 10 10"><path d="M1,1 h8 l-4,8 z"/></svg></button>
              </div>
            </fieldset>
            <fieldset class="scaling">
              <legend>Scaling</legend>
              ${this.field("xdiv", "X Division", "10.00m")}
              ${this.field("ydiv", "Y Division", "25.00u")}
              ${this.field("yoff", "Y Offset", "-25.00u")}
              <div class="row fits"><button class="btn">Fit X</button><button class="btn" disabled>Fit Y</button><button class="btn on">Auto Y</button></div>
            </fieldset>
            <fieldset class="cursors">
              <legend>Measurement Cursors</legend>
              <div class="cursor"><label for="c1">1</label>${this.drop("c1", "Cursor 1", "r87[i]-r88[i]")}
                <div class="read"><span>X: 1.0851</span><span>Y:-94.944u</span></div></div>
              <div class="cursor"><label for="c2">2</label>${this.drop("c2", "Cursor 2", "r87[i]-r88[i]")}
                <div class="read"><span>X: 1.1063</span><span>Y: 101.30u</span></div></div>
              <div class="cursor"><span></span>${this.drop("c3", "Difference", "Cursor 2 - Cursor 1")}
                <div class="read"><span>X: 21.178m</span><span>Y: 196.24u</span></div></div>
            </fieldset>
          </div>
        </aside>
        <main class="work">
          <section class="sheet">
            <div class="view">
              <circuit-sheet></circuit-sheet>
              <div class="vbar">
                <button class="xp" aria-label="Scroll up">${chevron("M1,7 l4,-4 l4,4")}</button>
                <div class="grip v"><i></i></div>
                <div class="fill"></div>
                <button class="xp" aria-label="Scroll down">${chevron("M1,3 l4,4 l4,-4")}</button>
              </div>
            </div>
            <div class="hbar">
              <button class="xp" aria-label="Scroll left">${chevron("M7,1 l-4,4 l4,4")}</button>
              <div class="grip h"><i></i></div>
              <div class="fill"></div>
              <button class="xp" aria-label="Scroll right">${chevron("M3,1 l4,4 l-4,4")}</button>
            </div>
          </section>
          <section class="scope">
            <wave-plot></wave-plot>
            <div class="old">
              <button aria-label="Scroll wave left"><svg viewBox="0 0 4 8"><path d="M4,0 v8 l-4,-4 z"/></svg></button>
              <div class="before"></div><button aria-label="Wave position"></button><div class="after"></div>
              <button aria-label="Scroll wave right"><svg viewBox="0 0 4 8"><path d="M0,0 v8 l4,-4 z"/></svg></button>
            </div>
            <div class="strip">
              <button class="sheettab">Transient Analysis<svg viewBox="0 0 100 16" preserveAspectRatio="none" aria-hidden="true"><path d="M0,.5 L4,15 H94 L98,.5"/></svg></button>
            </div>
          </section>
        </main>
      </div>
      <div class="status"><div></div><div></div></div>
      <footer class="task">
        <button class="start"><cm-icon name="flag"></cm-icon>Start</button>
        <button class="app on"><cm-icon name="app"></cm-icon>CircuitMaker</button>
        <button class="app"><cm-icon name="disk"></cm-icon>Total Commander 6.5...</button>
        <button class="app"><cm-icon name="office"></cm-icon>Microsoft Office Pictu...</button>
        <button class="app"><cm-icon name="office"></cm-icon>Microsoft Office Pictu...</button>
        <span class="lang">HU</span>
        <div class="tray">
          ${[1, 2, 3, 4, 5].map((n) => html`<cm-icon name="tray${n}"></cm-icon>`)}
          <time>9:59</time>
        </div>
      </footer>`;
  }
}
